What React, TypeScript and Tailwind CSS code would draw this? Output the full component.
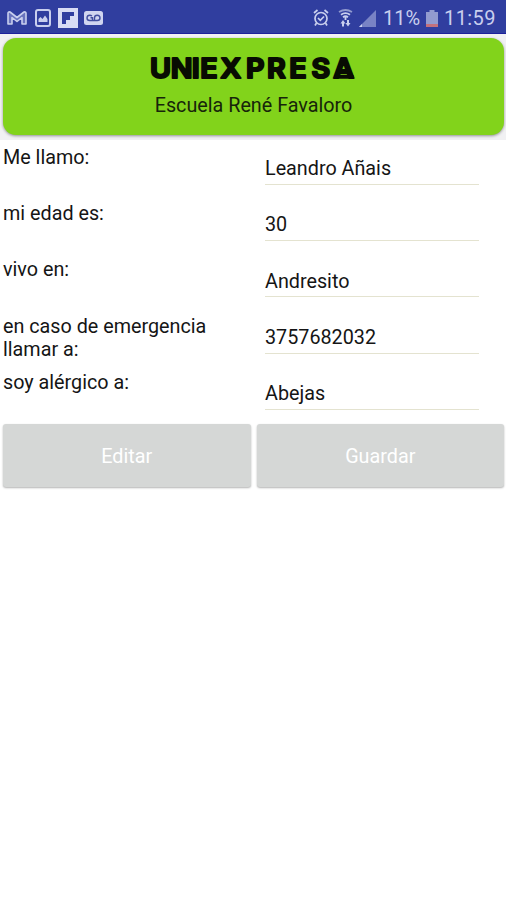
import React from "react";

interface FieldProps {
  label: string;
  value: string;
}

interface ActionButtonProps {
  children: React.ReactNode;
}

const fields: FieldProps[] = [
  { label: "Me llamo:", value: "Leandro Añais" },
  { label: "mi edad es:", value: "30" },
  { label: "vivo en:", value: "Andresito" },
  { label: "en caso de emergencia llamar a:", value: "3757682032" },
  { label: "soy alérgico a:", value: "Abejas" },
];

const StatusBar: React.FC = () => {
  return (
    <div className="flex h-[34px] items-center justify-between border-b border-[#1d219b] bg-[#303e9f] pl-[7px] pr-[9px] text-[#c9cfee]">
      <div className="flex items-center pt-[3px]">
        <svg className="h-[16px] w-[20px]" viewBox="0 0 20 16" fill="none" stroke="currentColor" strokeWidth="1.6" strokeLinejoin="round">
          <path d="M1 14V3.5Q1 1.5 3 2L10 7.5L17 2Q19 1.5 19 3.5V14H15V7.5L10 11.5L5 7.5V14Z" fill="#6873bd" />
        </svg>
        <svg className="ml-[8px] h-[18px] w-[16px]" viewBox="0 0 16 18" fill="none" stroke="currentColor" strokeWidth="2">
          <rect x="1" y="1" width="14" height="16" rx="2" />
          <path d="M3.5 13V10L5.5 8L7.5 10L10 6.5L12.5 10V13Z" fill="currentColor" stroke="none" />
        </svg>
        <svg className="ml-[7px] h-[20px] w-[20px]" viewBox="0 0 20 20">
          <path d="M0 0H20V20H0Z" fill="#d8dcf4" />
          <path d="M4 4H16V8H12V12H8V16H4Z" fill="#303e9f" />
        </svg>
        <svg className="ml-[6px] h-[14px] w-[19px]" viewBox="0 0 19 14">
          <rect width="19" height="14" rx="2.5" fill="#d0d5f0" />
          <path d="M8 5Q7 4.3 5.8 4.3Q3 4.3 3 7Q3 9.5 5.8 9.5H13.2Q16 9.5 16 7Q16 4.3 13.2 4.3Q10.5 4.3 10.5 7V9M8.5 9V6.8H6.5" fill="none" stroke="#414e9f" strokeWidth="1.4" />
        </svg>
      </div>
      <div className="flex items-center pt-[3px]">
        <svg className="h-[18px] w-[16px]" viewBox="0 0 16 18" fill="none" stroke="currentColor" strokeWidth="1.7">
          <circle cx="8" cy="9.5" r="6" />
          <path d="M1 4L4.5 1M15 4L11.5 1M3.5 14L2 16.5M12.5 14L14 16.5M5 9L7.3 11.3L11 7.5" />
        </svg>
        <svg className="ml-[9px] h-[18px] w-[15px]" viewBox="0 0 15 18" fill="none" stroke="currentColor" strokeWidth="1.8">
          <path d="M1 3Q7.5 -1 14 3" stroke="#929bcf" />
          <path d="M3 5.7Q7.5 2.5 12 5.7M5 8.3Q7.5 6.3 10 8.3" />
          <path d="M7.5 8V11" />
          <path d="M5 17.5V13M10 11V16" strokeWidth="2" />
          <path d="M2.5 14.5L5 11L7.5 14.5ZM7.5 14L10 17.5L12.5 14Z" fill="currentColor" stroke="none" />
        </svg>
        <svg className="ml-[6px] h-[17px] w-[17px]" viewBox="0 0 17 17">
          <path d="M17 0V17H0Z" fill="#7983c5" />
          <path d="M3 14V17H0Z" fill="#c9cfee" />
        </svg>
        <span className="ml-[7px] w-[38px] whitespace-nowrap text-[20px] leading-[22px]">11%</span>
        <svg className="ml-[5px] h-[17px] w-[12px]" viewBox="0 0 12 17">
          <path d="M3.5 0H8.5V2H12V17H0V2H3.5Z" fill="#929bcf" />
          <path d="M0 14H12V17H0Z" fill="#c3717d" />
        </svg>
        <span className="ml-[6px] w-[53px] whitespace-nowrap text-[20px] leading-[22px] tracking-[0.4px]">11:59</span>
      </div>
    </div>
  );
};

const Header: React.FC = () => {
  return (
    <div className="h-[106px] bg-[#f1f1f3] pl-[3px] pr-[2px] pt-[4px]">
      <div className="flex h-[97px] flex-col items-center rounded-[13px] bg-[#82d31b] shadow-[0_1px_3px_rgba(0,0,0,0.4)]">
        {/* each letter of the wordmark has its own x */}
        <svg className="mt-[11px] h-[38px] w-[221px] overflow-visible" viewBox="0 0 221 38">
          <text
            x="6.6 26.2 46 54 73.2 97.2 117 138 159 179.5"
            y="29"
            transform="scale(1.06 1)"
            className="fill-[#080c02] stroke-[#080c02] font-['Inter'] text-[27px] font-semibold"
            strokeWidth="2.2"
            strokeLinejoin="round"
          >
            UNIEXPRESA
          </text>
          {/* closed foot of the last letter */}
          <path d="M193 27.8H209" stroke="#080c02" strokeWidth="4" strokeLinecap="round" />
        </svg>
        <p className="mt-[7px] text-[19.75px] leading-[24px] text-[#17250a]">Escuela René Favaloro</p>
      </div>
    </div>
  );
};

const Field: React.FC<FieldProps> = ({ label, value }) => {
  return (
    <div className="flex h-[56.25px] pl-[3px]">
      <p className="w-[262px] pr-[40px] pt-[5.8px] text-[19.75px] leading-[23px]">{label}</p>
      <div className="h-[44.8px] w-[214px] border-b border-[#e4e3d0] pt-[17px] text-[19.75px] leading-[24px]">
        {value}
      </div>
    </div>
  );
};

const ActionButton: React.FC<ActionButtonProps> = ({ children }) => {
  return (
    <button className="h-[63px] flex-1 rounded-[3px] bg-[#d5d7d6] pt-[2px] text-[19.75px] text-white shadow-[0_1px_2px_rgba(0,0,0,0.3)]">
      {children}
    </button>
  );
};

const App: React.FC = () => {
  return (
    <div className="h-[900px] w-[506px] overflow-hidden bg-white font-['Roboto',sans-serif] text-[#151515]">
      <StatusBar />
      <Header />
      {fields.map((field) => (
        <Field key={field.label} label={field.label} value={field.value} />
      ))}
      <div className="flex gap-[6px] pl-[3px] pr-[2px] pt-[3px]">
        <ActionButton>Editar</ActionButton>
        <ActionButton>Guardar</ActionButton>
      </div>
    </div>
  );
};

export default App;
